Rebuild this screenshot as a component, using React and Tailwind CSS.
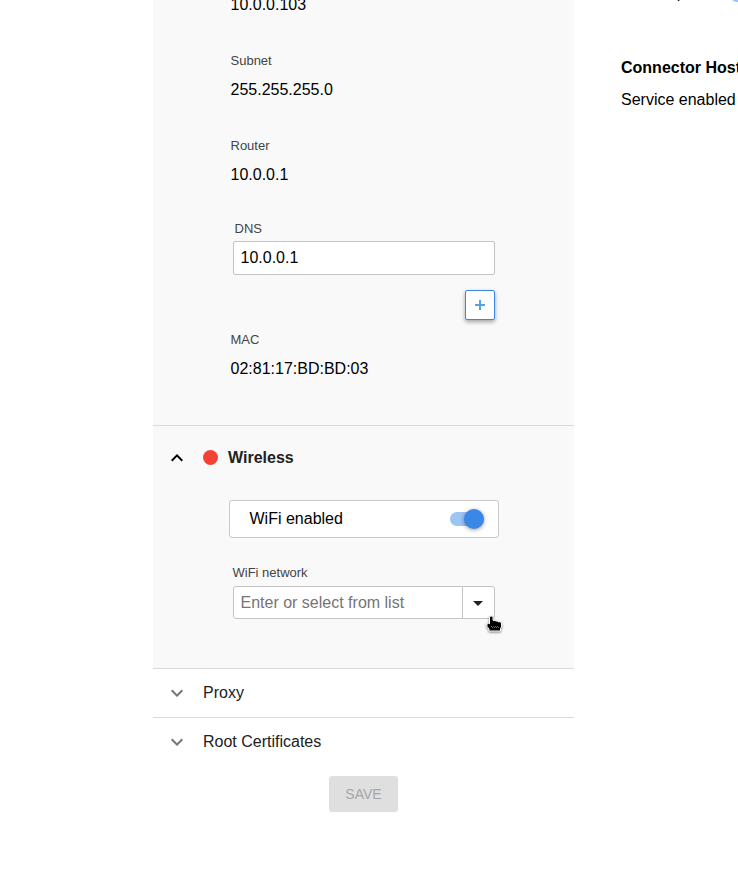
import React from 'react';

function Field({ label, value }) {
  return (
    <div className="flex h-[85px] flex-col pl-[77.5px]">
      <div className="h-[27px] text-[13px] leading-5 text-[#444]">{label}</div>
      <div className="text-base leading-6 text-black">{value}</div>
    </div>
  );
}

function Chevron({ up, color }) {
  return (
    <svg className="h-6 w-6" viewBox="0 0 24 24" fill={color}>
      {up ? (
        <path d="M12 8l-6 6 1.41 1.41L12 10.83l4.59 4.58L18 14z" />
      ) : (
        <path d="M16.59 8.59L12 13.17 7.41 8.59 6 10l6 6 6-6z" />
      )}
    </svg>
  );
}

function Toggle() {
  return (
    <div className="flex h-5 w-[34px] items-center">
      <div className="flex h-[14px] w-[34px] items-center justify-end rounded-full bg-[#9cc4f5]">
        <div className="h-5 w-5 shrink-0 rounded-full bg-[#3a87e8] shadow-[0_1px_4px_rgba(0,0,0,0.4)]" />
      </div>
    </div>
  );
}

function CollapsedSection({ title, className }) {
  return (
    <div className={'flex h-[49px] items-center border-t pl-3 ' + className}>
      <Chevron color="#757575" />
      <span className="pl-[14px] text-base leading-6 text-[#212121]">{title}</span>
    </div>
  );
}

function HandCursor() {
  return (
    <svg
      className="absolute top-[26px] left-[251px] z-10 h-[20px] w-[20px] drop-shadow-[0_1px_1px_rgba(0,0,0,0.5)]"
      viewBox="0 0 20 20"
    >
      <path
        d="M4.500 4c0-1.200 3.500-1.200 3.500 0v3.300h2l.5.7h2l.5.7h2l1.500 1.300v4l-1 1.500v2.500H4v-2L2 13.500V10.300h1.800l.7.5z"
        fill="#000"
        stroke="#fff"
        strokeWidth="1"
        strokeLinejoin="round"
      />
      <path d="M6 13.500h1M7 14.500h1M8 13.500h1M9 14.500h1M10 13.500h1M11 14.500h1M12 13.500h1M13 14.500h1" stroke="#666" strokeWidth="1" />
    </svg>
  );
}

export default function App() {
  return (
    <div className="flex h-[895px] w-[738px] overflow-hidden bg-white font-['Liberation_Sans',Arial,sans-serif] text-black">
      <main className="ml-[153px] w-[421px] shrink-0">
        <section className="h-[425px] overflow-hidden bg-[#f9f9f9]">
          <div className="-mt-[34px]">
            <Field label="IP" value="10.0.0.103" />
            <Field label="Subnet" value="255.255.255.0" />
            <Field label="Router" value="10.0.0.1" />
          </div>
          <div className="-mt-[2px] flex h-[111px] w-[342px] flex-col pl-20">
            <label className="h-[22px] pl-[1.500px] text-[13px] leading-5 text-[#444]">DNS</label>
            <div className="flex h-[34px] items-center rounded-[2px] border border-[#c4c4c4] bg-white pl-[6.500px] text-base leading-6">
              10.0.0.1
            </div>
            <button className="mt-[15px] flex h-[30px] w-[30px] items-center justify-center self-end rounded-[2px] border border-[#3a87e8] bg-white shadow-[0_2px_4px_rgba(0,0,0,0.35)]">
              <svg className="h-[10px] w-[10px]" viewBox="0 0 10 10" fill="#2f8ae0" fillOpacity="0.8">
                <path d="M4 0h2v4h4v2H6v4H4V6H0V4h4z" />
              </svg>
            </button>
          </div>
          <Field label="MAC" value="02:81:17:BD:BD:03" />
        </section>

        <section className="h-[243px] border-t border-[#dadada] bg-[#f9f9f9]">
          <header className="flex h-[62px] items-center pl-3">
            <div className="pt-[2px]">
              <Chevron up color="#000" />
            </div>
            <span className="ml-[14px] h-[15px] w-[15px] rounded-full bg-[#f44336]" />
            <h2 className="ml-[10px] pt-[2px] text-base leading-6 font-bold text-[#212121]">Wireless</h2>
          </header>
          <div className="mt-3 ml-[76px] flex h-[38px] w-[270px] items-center justify-between rounded-[3px] border border-[#c9c9c9] bg-white pr-[14px] pl-[19.500px]">
            <span className="text-base leading-6">WiFi enabled</span>
            <Toggle />
          </div>
          <div className="mt-[25px] ml-20 w-[262px]">
            <div className="-ml-[0.500px] h-[23px] text-[13px] leading-5 text-[#444]">WiFi network</div>
            <div className="relative flex h-[33px] rounded-[3px] border border-[#c4c4c4] bg-white">
              <div className="flex flex-1 items-center pl-[6.500px] text-base leading-6 text-[#757575]">
                Enter or select from list
              </div>
              <div className="flex w-8 items-center justify-center border-l border-[#c4c4c4] pr-px">
                <svg className="mt-[2px] h-[5px] w-[10px]" viewBox="0 0 10 5" fill="#212121">
                  <path d="M0 0h10L5 5z" />
                </svg>
              </div>
              <HandCursor />
            </div>
          </div>
        </section>

        <CollapsedSection title="Proxy" className="border-[#dadada]" />
        <CollapsedSection title="Root Certificates" className="border-[#dadada]" />
        <div className="flex justify-center pt-[10px]">
          <button className="h-9 w-[69px] rounded-[3px] bg-[#dfdfdf] text-sm text-[#a6a6a6]">SAVE</button>
        </div>
      </main>

      <aside className="ml-[47px] w-[117px] shrink-0 overflow-hidden whitespace-nowrap">
        <div className="-mt-[19px] flex h-6 items-center">
          <span className="w-[109px] shrink-0 pl-[0.500px] text-base leading-6">Clean up</span>
          <div className="mt-[4px] h-[14px] w-[34px] shrink-0 rounded-full bg-[#9cc4f5]" />
        </div>
        <h2 className="mt-[51px] text-base leading-6 font-bold">Connector Host</h2>
        <div className="mt-2 text-base leading-6">Service enabled</div>
      </aside>
    </div>
  );
}
